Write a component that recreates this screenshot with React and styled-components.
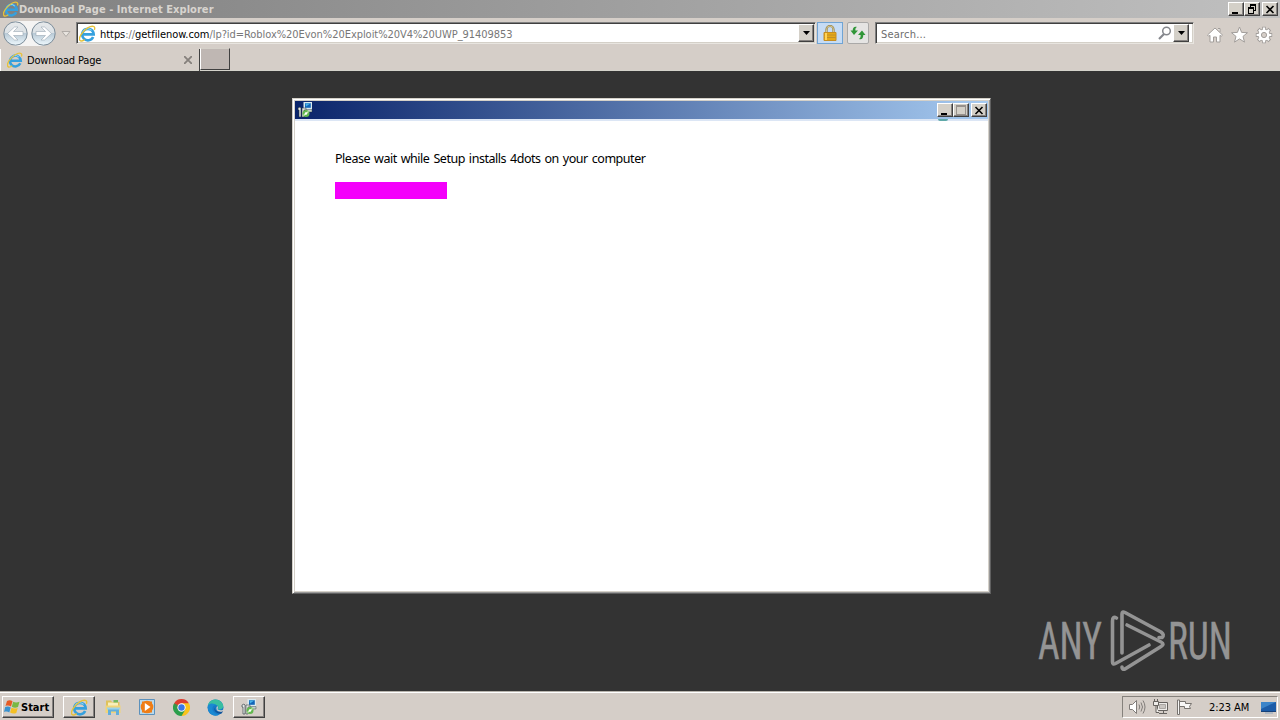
import styled, {createGlobalStyle, css} from "styled-components";

const GlobalStyle = createGlobalStyle`
  * { box-sizing: border-box; }
  body {
    margin: 0;
    overflow: hidden;
    background: #333;
    font-family: "DejaVu Sans Condensed", "DejaVu Sans", Tahoma, sans-serif;
    font-stretch: condensed;
    font-size: 11px;
    color: #000;
  }
  svg { display: block; flex: none; }
`;

const raised = css`
  border: 1px solid;
  border-color: #fff #404040 #404040 #fff;
  box-shadow: inset -1px -1px 0 #868280;
`;

const Screen = styled.div`
  display: flex;
  flex-direction: column;
  width: 1280px;
  height: 720px;
`;

const TitleBar = styled.div`
  display: flex;
  align-items: center;
  height: 18px;
  padding: 0 2px 0 3px;
  background: linear-gradient(90deg, #808080, #c0c0c0);
`;

const Title = styled.div`
  flex: 1;
  color: #d8d4cf;
  font-weight: bold;
  letter-spacing: 0.05px;
  white-space: nowrap;
`;

const WindowButtons = styled.div`
  display: flex;
`;

const WindowButton = styled.div`
  ${raised}
  display: flex;
  align-items: center;
  justify-content: center;
  width: 16px;
  height: 14px;
  margin-left: ${p => p.$gap || 0}px;
  background: #d4d0c8;
`;

const NavBar = styled.div`
  display: flex;
  align-items: flex-start;
  height: 30px;
  padding: 4px 7px 0 2px;
  background: #d5cec8;
`;

const NavArrows = styled.div`
  width: 74px;
  margin-top: -1px;
`;

const Field = styled.div`
  display: flex;
  align-items: center;
  width: ${p => p.$width}px;
  height: 22px;
  padding: 0 1px 0 2px;
  background: #fff;
  border: 1px solid;
  border-color: #808080 #e8e5e0 #e8e5e0 #808080;
  box-shadow: inset 1px 1px 0 #404040, inset -1px -1px 0 #d4d0c8;
`;

const Address = styled.div`
  flex: 1;
  margin-left: 4px;
  padding-top: 2px;
  color: #777;
  letter-spacing: -0.05px;
  white-space: nowrap;

  b {
    color: #000;
    font-weight: normal;
  }
`;

const SearchText = styled.div`
  flex: 1;
  margin-left: 3px;
  padding-top: 2px;
  color: #6d6d6d;
  letter-spacing: 0.2px;
`;

const DropButton = styled.div`
  ${raised}
  display: flex;
  align-items: center;
  justify-content: center;
  width: 16px;
  height: 18px;
  background: #d4d0c8;
`;

const SearchDrop = styled(DropButton)`
  margin: 0 3px 0 1px;
`;

const ToolButton = styled.div`
  display: flex;
  align-items: center;
  justify-content: center;
  width: ${p => p.$width}px;
  height: 22px;
  margin: 0 ${p => p.$right}px 0 ${p => p.$left}px;
  border: 1px solid ${p => p.$active ? "#70a4d4" : "#aaa9a8"};
  border-radius: ${p => p.$active ? 0 : 2}px;
  background: ${p => p.$active ? "#c6dcf5" : "#e5e4e3"};
`;

const NavIcons = styled.div`
  display: flex;
  gap: 6px;
  margin: 4px 0 0 auto;
`;

const TabBar = styled.div`
  display: flex;
  height: 23px;
  background: #d5cec8;
  border-bottom: 1px solid #d4d3cb;
`;

const Tab = styled.div`
  display: flex;
  align-items: center;
  width: 200px;
  height: 22px;
  margin-top: 1px;
  padding: 0 7px 0 6px;
  border-left: 1px solid #fff;
  border-right: 1px solid #404040;
`;

const TabTitle = styled.div`
  flex: 1;
  margin-left: 4px;
  letter-spacing: -0.15px;
`;

const NewTab = styled.div`
  width: 30px;
  height: 22px;
  background: #bfb7b3;
  border: 1px solid;
  border-color: #d4d0c8 #404040 #404040 #fff;
`;

const Page = styled.div`
  position: relative;
  flex: 1;
  background: #333;
`;

const Installer = styled.div`
  position: absolute;
  left: 292px;
  top: 27px;
  width: 699px;
  height: 496px;
  padding: 1px;
  background: #fff;
  border: 1px solid;
  border-color: #d4d0c8 #606060 #606060 #d4d0c8;
  box-shadow: inset 1px 1px 0 #fff, inset -1px -1px 0 #999, inset 2px 2px 0 #d4d0c8, inset -2px -2px 0 #d4d0c8;
`;

const InstallerBar = styled.div`
  display: flex;
  align-items: center;
  justify-content: space-between;
  height: 18px;
  margin: 1px 1px 0;
  padding: 0 1px 0 2px;
  background: linear-gradient(90deg, #0a246a, #a6caf0);
`;

const InstallerBody = styled.div`
  position: relative;
  margin: 0 1px;
  padding: 30px 40px 0;
  border-top: 2px solid #dce6f5;
`;

const GlobeEdge = styled.div`
  position: absolute;
  top: -2px;
  right: 40px;
  width: 10px;
  height: 2px;
  border-radius: 0 0 5px 5px;
  background: #5fa9a8;
`;

const Message = styled.div`
  height: 16px;
  line-height: 16px;
  font-family: "Noto Sans", "Open Sans", sans-serif;
  font-stretch: normal;
  font-size: 12.5px;
  letter-spacing: -0.47px;
  word-spacing: 1.2px;
  white-space: nowrap;
`;

const Progress = styled.div`
  width: 112px;
  height: 17px;
  margin-top: 15px;
  background: #f400fb;
`;

const Watermark = styled.svg`
  position: absolute;
  left: 1036px;
  top: 537px;
  overflow: visible;
`;

const Taskbar = styled.div`
  display: flex;
  align-items: center;
  height: 29px;
  padding: 3px 2px 1px 2px;
  background: #d5cec8;
  border-top: 1px solid #b8b4ad;
  box-shadow: inset 0 1px 0 #fff;
`;

const StartButton = styled.div`
  ${raised}
  display: flex;
  align-items: center;
  width: 52px;
  height: 22px;
  padding-left: 1px;
  font-size: 11px;
  font-weight: bold;
`;

const TaskItem = styled.div`
  display: flex;
  align-items: center;
  justify-content: center;
  width: 32px;
  height: 22px;
  margin-left: ${p => p.$gap}px;
  ${p => p.$open && raised}
`;

const Tray = styled.div`
  display: flex;
  align-items: center;
  gap: 6px;
  width: 156px;
  height: 22px;
  margin-left: auto;
  padding-left: 5px;
  border: 1px solid;
  border-color: #85817c #fff #fff #85817c;
`;

const Clock = styled.div`
  flex: 1;
  margin: 0 2px 0 10px;
  letter-spacing: -0.05px;
  white-space: nowrap;
`;

const IeIcon = ({size = 16}) => (
  <svg width={size} height={size} viewBox="0 0 16 16" fill="none">
    <path d="M13.300 11.300A5.400 5.400 0 1 1 13.800 8.800H4" stroke="#35a0de" strokeWidth="2.500"/>
    <path d="M3.600 6.500A5 5 0 0 1 11.800 5" stroke="#9adcf8" strokeWidth="1"/>
    <path d="M14.400 4.600C16 .9 12.400.2 8.200 2.700 3 5.900-.9 12.300.9 14.500c.9 1.100 2.800.4 4.400-.7" stroke="#e6c23a" strokeWidth="1.300"/>
  </svg>
);

const Arrow = () => (
  <svg width="7" height="4"><path d="M0 0h7L3.500 4z" fill="#000"/></svg>
);

const MinimizeIcon = () => (
  <svg width="10" height="9"><path d="M1 7h6v2H1z" fill="#000"/></svg>
);

const CloseIcon = () => (
  <svg width="10" height="9" viewBox="0 0 10 9"><path d="M1.500 1l7 7m0-7l-7 7" stroke="#000" strokeWidth="1.600"/></svg>
);

const RestoreIcon = () => (
  <svg width="10" height="10" fill="none" stroke="#000" shapeRendering="crispEdges">
    <path d="M3.500 1v3M8.500 1v5M3 1.500h6M3 .5h6M6 6.500h3M1.500 4v5M6.500 4v5M1 4.500h6M1 3.500h6M1 9.500h6"/>
  </svg>
);

const MaximizeIcon = () => (
  <svg width="10" height="10" fill="none" stroke="#97918c" shapeRendering="crispEdges">
    <path d="M.5 .5h9v9h-9zM1 1.500h8"/>
  </svg>
);

const SetupIcon = () => (
  <svg width="16" height="16" viewBox="0 0 16 16">
    <path d="M6.500 0H15v8H6.500z" fill="#d9e9ef"/>
    <path d="M8 1.200h5.800v4.600H8z" fill="#1266b8"/>
    <path d="M8.500 1.500h4.700L9 4.500z" fill="#48b1e7"/>
    <path d="M8 7.500h7V10H8z" fill="#c5d1c9" stroke="#26333a" strokeWidth=".4"/>
    <path d="M1 6l2-1 1 1v9H2V8H1z" fill="#e6e9e7" stroke="#26333a" strokeWidth=".6"/>
    <path d="M5 6h4v2H7v7H5z" fill="#e1e4de" stroke="#26333a" strokeWidth=".5"/>
    <circle cx="9" cy="11.500" r="3.500" fill="#63b84f"/>
    <path d="M6.500 13.500l5-4" stroke="#d4f0c2" strokeWidth="1.300"/>
    <circle cx="9" cy="11.500" r="1.200" fill="#fff"/>
  </svg>
);

const NavButtonsIcon = () => (
  <svg width="70" height="28" viewBox="0 0 70 28">
    <defs>
      <linearGradient id="ball" x2="0" y2="1">
        <stop stopColor="#e7e9eb"/>
        <stop offset=".46" stopColor="#dce2e6"/>
        <stop offset=".5" stopColor="#b9cad6"/>
        <stop offset="1" stopColor="#eef8fd"/>
      </linearGradient>
    </defs>
    <path d="M13 0h28a13 13 0 0 1 0 25H13a13 13 0 0 1 0-25" fill="#f5f4f3"/>
    <g fill="url(#ball)" stroke="#7b8c99">
      <circle cx="13.500" cy="12.500" r="11.700"/>
      <circle cx="41.500" cy="12.500" r="11.700"/>
    </g>
    <g fill="#fff" stroke="#9aa8b3" strokeWidth=".6">
      <path d="M5.500 12.500l7-6.500H16l-4.500 4.500H21v4h-9.500L16 19h-3.500z"/>
      <path d="M49.500 12.500l-7-6.500H39l4.500 4.500H34v4h9.500L39 19h3.500z"/>
    </g>
    <path d="M60 10.500h8l-4 5z" fill="#e8e4df" stroke="#aaa6a1" strokeWidth=".9"/>
  </svg>
);

const LockIcon = () => (
  <svg width="14" height="17" viewBox="0 0 14 17">
    <path d="M3.500 8V4.500a3.500 3.500 0 0 1 7 0V8" fill="none" stroke="#988347" strokeWidth="2.200"/>
    <path d="M3.500 8V4.500a3.500 3.500 0 0 1 7 0V8" fill="none" stroke="#ded5a4" strokeWidth=".8"/>
    <path d="M1 7.500h12v8H1z" fill="#e6a916" stroke="#c58d22"/>
    <path d="M1.500 10h11M1.500 12.500h11" stroke="#b98a2b" strokeWidth=".8"/>
    <path d="M3 8v7" stroke="#ffd45a" strokeWidth="2"/>
  </svg>
);

const RefreshIcon = () => (
  <svg width="16" height="14" viewBox="0 0 16 14" fill="#309638">
    <path d="M7 1C4.500 0 2.700 1.600 2.700 4.500H.5L4 9l4-4.500H5.400C5.200 2.800 5.700 1.700 7 1z"/>
    <path d="M9 13c2.500 1 4.300-.6 4.300-4h2.200L12 4.500 8 9h2.600c.2 1.900-.3 3.300-1.600 4z"/>
  </svg>
);

const SearchIcon = () => (
  <svg width="14" height="14" viewBox="0 0 14 14" fill="none">
    <circle cx="8.500" cy="5" r="3.800" stroke="#85878c" strokeWidth="1.500"/>
    <path d="M6 8L1 13" stroke="#85878c" strokeWidth="2.200"/>
  </svg>
);

const HomeIcon = () => (
  <svg width="18" height="18" viewBox="0 0 18 18">
    <path d="M9 2l7.500 7-1.300 1.300L14 9.300V16h-3.500v-5h-3v5H4V9.300l-1.200 1L1.500 9zM12 2.500h2V6" fill="#fff" stroke="#a29e9b"/>
  </svg>
);

const StarIcon = () => (
  <svg width="19" height="18" viewBox="0 0 18 18">
    <path d="M9 1l2.100 5.400 5.900.3-4.500 3.700 1.500 5.700L9 12.900l-5 3.200 1.500-5.700L1 6.700l5.900-.3z" fill="#fff" stroke="#a29e9b"/>
  </svg>
);

const GearIcon = () => (
  <svg width="18" height="18" viewBox="0 0 18 18">
    <g stroke="#a29e9b" strokeWidth="3.800">
      <path d="M9 .8v16.400M.8 9h16.400M3.200 3.200l11.600 11.600M14.800 3.200L3.200 14.800"/>
    </g>
    <circle cx="9" cy="9" r="6.300" fill="#a29e9b"/>
    <g stroke="#fff" strokeWidth="2.200">
      <path d="M9 1.600v14.800M1.600 9h14.800M3.900 3.900l10.200 10.200M14.100 3.900L3.900 14.100"/>
    </g>
    <circle cx="9" cy="9" r="5.500" fill="#fff"/>
    <circle cx="9" cy="9" r="2.600" fill="#d5cec8" stroke="#a29e9b"/>
  </svg>
);

const WindowsIcon = () => (
  <svg width="17" height="16" viewBox="0 0 17 16">
    <path d="M3 2c2-1.300 4-.9 5.500.2L7 7.500C5.400 6.500 3.600 6.200 1.500 7z" fill="#e65b24"/>
    <path d="M9.200 2.700c2 1 3.800 1 6.300 0L14 8c-2 .9-4 .9-6.200-.2z" fill="#79b844"/>
    <path d="M1.200 8c2-.9 4-.6 5.500.4l-1.400 5C3.800 12.400 2 12.300 0 13z" fill="#3a92cf"/>
    <path d="M7.500 8.800c2.100 1 4 1 6.200.2l-1.400 5c-2.300.9-4.200.6-6.200-.4z" fill="#f4c025"/>
  </svg>
);

const FolderIcon = () => (
  <svg width="18" height="18" viewBox="0 0 18 18">
    <path d="M2 2.500h5l1 1.500h7.500v10H2z" fill="#dfc25c"/>
    <path d="M4 4.500h10V9H4z" fill="#f7efbb"/>
    <path d="M9.500 2H14v2.500H9.500z" fill="#72b760"/>
    <path d="M1.500 7.500h15V15h-15z" fill="#f0d478"/>
    <path d="M4 17v-6h11v6h-3v-3.500H7V17z" fill="#62aedb"/>
    <path d="M3 10.500h13" stroke="#9bd2e8" strokeWidth="2"/>
  </svg>
);

const PlayerIcon = () => (
  <svg width="18" height="18" viewBox="0 0 18 18">
    <path d="M1.500 1.500h15v15h-15z" fill="#b8d9ed" stroke="#5c91bc"/>
    <path d="M4 3.500h10v11H4z" fill="#ef7d16"/>
    <circle cx="9" cy="9" r="6.300" fill="#ef7d16"/>
    <path d="M6.800 5v8L12.500 9z" fill="#fff"/>
  </svg>
);

const ChromeIcon = () => (
  <svg width="17" height="17" viewBox="0 0 16 16">
    <path d="M8 8L1.070 4a8 8 0 0 1 13.860 0z" fill="#dc3f30"/>
    <path d="M8 8V4h6.930A8 8 0 0 1 8 16z" fill="#fac31c"/>
    <path d="M8 8l3.500 2L8 16A8 8 0 0 1 1.070 4z" fill="#2b9e4c"/>
    <path d="M8 8L4.500 10 1.070 4 8 4.200z" fill="#dc3f30"/>
    <path d="M1.070 4L4.600 10 8 8z" fill="#2b9e4c"/>
    <circle cx="8" cy="8" r="3.900" fill="#fff"/>
    <circle cx="8" cy="8" r="3" fill="#3b78e7"/>
  </svg>
);

const EdgeIcon = () => (
  <svg width="17" height="17" viewBox="0 0 17 17">
    <circle cx="8.500" cy="8.500" r="8" fill="#1679c7"/>
    <path d="M.8 7C2-.5 12-1.700 15.700 5c2 4-1.200 6.200-5 5.300 1.500-2 .4-4-2.200-4.500C5.500 5.200 2.500 5 .8 7z" fill="#39bea1"/>
    <path d="M1 6.500C3 3.500 7.500 4 9.500 6.300 6 5.500 4.500 9 6 12c1.200 2.500 4 3.500 6.500 3.400C7 19-.5 14.500 1 6.500z" fill="#1b89d2"/>
    <path d="M9.700 7.200c-2.500 1-2.500 5 2.300 5.500 2 .2 3.400-.5 4-.9 0 1-.8 2.200-1.800 3C8 14.800 5 9.500 9.700 7.200z" fill="#125399"/>
    <path d="M10.200 7c1.200 1 .7 2.300.3 3.300 1.500 1.300 4.500 1.200 6 .1l-.8 2c-5 1.200-7.700-2-5.500-5.400z" fill="#d5cec8"/>
  </svg>
);

const SpeakerIcon = () => (
  <svg width="18" height="16" viewBox="0 0 18 16" fill="none" stroke="#807c79">
    <path d="M1.500 5.500h3l4-4v13l-4-4h-3z" fill="#fff"/>
    <path d="M11 5.500q1.500 2.500 0 5M13 3.500q3 4.500 0 9M15 1.500q4 6.500 0 13"/>
  </svg>
);

const NetworkIcon = () => (
  <svg width="18" height="16" viewBox="0 0 18 16" fill="#eeece9" stroke="#66625f">
    <path d="M5.500 3.500h10v8h-10z"/>
    <path d="M7.500 5.500h6v4h-6z" fill="#c9c5c1" stroke="#aaa6a2"/>
    <path d="M7 14.500h8M11.500 12v2"/>
    <path d="M1.500 2.500h5v4h-5zM2.500 0v2M5.500 0v2M4 7v6.500h3" />
  </svg>
);

const FlagIcon = () => (
  <svg width="17" height="16" viewBox="0 0 17 16" fill="#f8f7f6" stroke="#77736f">
    <path d="M3.500 2.500h6v2h6l-2 3 1 2h-6v-2h-5z"/>
    <path d="M1.500 1v14.500h2V1z"/>
  </svg>
);

const DesktopIcon = () => (
  <svg width="17" height="15" viewBox="0 0 17 15">
    <path d="M1 2h15v9H1z" fill="#1c5ca8"/>
    <path d="M1 2h15L1 9z" fill="#3b84c9"/>
    <path d="M1 11h15v1H1z" fill="#174178"/>
    <path d="M5 13h8" stroke="#8ca4bd"/>
  </svg>
);

const App = () => {
  return (
    <Screen>
      <GlobalStyle/>
      <TitleBar>
        <IeIcon/>
        <Title>Download Page - Internet Explorer</Title>
        <WindowButtons>
          <WindowButton><MinimizeIcon/></WindowButton>
          <WindowButton><RestoreIcon/></WindowButton>
          <WindowButton $gap={2}><CloseIcon/></WindowButton>
        </WindowButtons>
      </TitleBar>

      <NavBar>
        <NavArrows><NavButtonsIcon/></NavArrows>
        <Field $width={740}>
          <IeIcon size={17}/>
          <Address><b>https</b>://<b>getfilenow.com</b>/lp?id=Roblox%20Evon%20Exploit%20V4%20UWP_91409853</Address>
          <DropButton><Arrow/></DropButton>
        </Field>
        <ToolButton $width={26} $left={1} $right={4} $active><LockIcon/></ToolButton>
        <ToolButton $width={22} $left={0} $right={6}><RefreshIcon/></ToolButton>
        <Field $width={319}>
          <SearchText>Search...</SearchText>
          <SearchIcon/>
          <SearchDrop><Arrow/></SearchDrop>
        </Field>
        <NavIcons>
          <HomeIcon/>
          <StarIcon/>
          <GearIcon/>
        </NavIcons>
      </NavBar>

      <TabBar>
        <Tab>
          <IeIcon/>
          <TabTitle>Download Page</TabTitle>
          <svg width="8" height="8"><path d="M0 0l8 8m0-8L0 8" stroke="#85807c" strokeWidth="1.800"/></svg>
        </Tab>
        <NewTab/>
      </TabBar>

      <Page>
        <Installer>
          <InstallerBar>
            <SetupIcon/>
            <WindowButtons>
              <WindowButton><MinimizeIcon/></WindowButton>
              <WindowButton><MaximizeIcon/></WindowButton>
              <WindowButton $gap={2}><CloseIcon/></WindowButton>
            </WindowButtons>
          </InstallerBar>
          <InstallerBody>
            <GlobeEdge/>
            <Message>Please wait while Setup installs 4dots on your computer</Message>
            <Progress/>
          </InstallerBody>
        </Installer>

        <Watermark width="200" height="66" viewBox="0 0 200 66">
          <g fill="#949494" stroke="#949494" strokeWidth=".4" fontFamily="Roboto, sans-serif" fontSize="51">
            <text x="2" y="51" textLength="64" lengthAdjust="spacingAndGlyphs">ANY</text>
            <text x="132" y="51" textLength="64" lengthAdjust="spacingAndGlyphs">RUN</text>
          </g>
          <g fill="none" stroke="#949494" strokeWidth="3.600" strokeLinejoin="round" strokeLinecap="round">
            <path d="M80.500 10q-4-2-4 3v41q0 3 3 1.500L113 37"/>
            <path d="M86 45V6q0-3 3-1.500L125 24q4 3 1 5.500h-3"/>
            <path d="M91 17l34 17q4 2 0 4.500L89 61q-3 1-3-2"/>
          </g>
        </Watermark>
      </Page>

      <Taskbar>
        <StartButton><WindowsIcon/>Start</StartButton>
        <TaskItem $gap={9} $open><IeIcon size={17}/></TaskItem>
        <TaskItem $gap={2}><FolderIcon/></TaskItem>
        <TaskItem $gap={2}><PlayerIcon/></TaskItem>
        <TaskItem $gap={2}><ChromeIcon/></TaskItem>
        <TaskItem $gap={2}><EdgeIcon/></TaskItem>
        <TaskItem $gap={2} $open><SetupIcon/></TaskItem>
        <Tray>
          <SpeakerIcon/>
          <NetworkIcon/>
          <FlagIcon/>
          <Clock>2:23 AM</Clock>
          <DesktopIcon/>
        </Tray>
      </Taskbar>
    </Screen>
  );
};

export default App;
